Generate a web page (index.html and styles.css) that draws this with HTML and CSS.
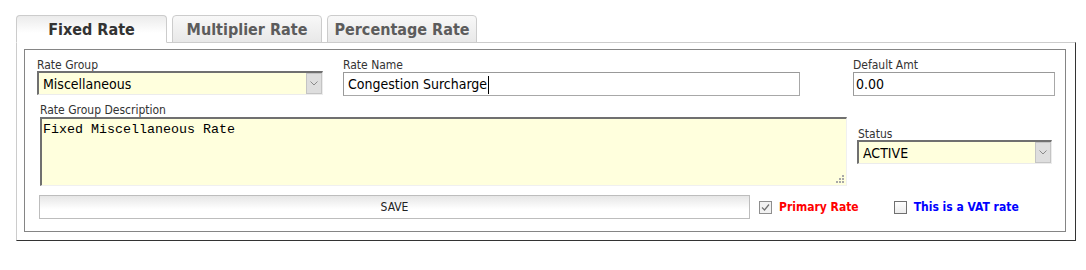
FILE: index.html
```html
<!DOCTYPE html>
<html>
<head>
<meta charset="utf-8">
<title>Rates</title>
<link rel="stylesheet" href="styles.css">
</head>
<body>
<div class="page">
  <div class="tabs">
    <div class="tab active">Fixed Rate</div>
    <div class="tab">Multiplier Rate</div>
    <div class="tab">Percentage Rate</div>
  </div>
  <div class="panel">
    <div class="box">
      <div class="row row1">
        <div class="field f-group">
          <label class="lbl">Rate Group</label>
          <div class="select-wrap">
            <select class="sel"><option>Miscellaneous</option></select>
            <span class="arrow"><svg width="8" height="5" viewBox="0 0 8 5"><path d="M0.5 0.5 L4 4 L7.5 0.5" fill="none" stroke="#8a8a8a" stroke-width="1"/></svg></span>
          </div>
        </div>
        <div class="field f-name">
          <label class="lbl">Rate Name</label>
          <div class="input-wrap">
            <input class="txt" type="text" value="Congestion Surcharge">
            <span class="caret"></span>
          </div>
        </div>
        <div class="field f-amt">
          <label class="lbl">Default Amt</label>
          <input class="txt amt" type="text" value="0.00">
        </div>
      </div>
      <div class="row row2">
        <div class="field f-desc">
          <label class="lbl">Rate Group Description</label>
          <div class="area-wrap">
            <textarea class="area">Fixed Miscellaneous Rate</textarea>
            <span class="grip"><svg width="8" height="8" viewBox="0 0 8 8"><g fill="#a8a8a8"><rect x="6" y="0" width="2" height="2"/><rect x="3" y="3" width="2" height="2"/><rect x="6" y="3" width="2" height="2"/><rect x="0" y="6" width="2" height="2"/><rect x="3" y="6" width="2" height="2"/><rect x="6" y="6" width="2" height="2"/></g></svg></span>
          </div>
        </div>
        <div class="field f-status">
          <label class="lbl lbl-status">Status</label>
          <div class="select-wrap">
            <select class="sel sel-status"><option>ACTIVE</option></select>
            <span class="arrow"><svg width="8" height="5" viewBox="0 0 8 5"><path d="M0.5 0.5 L4 4 L7.5 0.5" fill="none" stroke="#8a8a8a" stroke-width="1"/></svg></span>
          </div>
        </div>
      </div>
      <div class="row row3">
        <button class="save" type="button">SAVE</button>
        <div class="check primary">
          <svg width="13" height="13" viewBox="0 0 13 13"><rect x="0.5" y="0.5" width="12" height="12" fill="#f2f2f2" stroke="#8e8e8e"/><path d="M3 6.5 L5.5 9 L10 3.5" fill="none" stroke="#707070" stroke-width="1.2"/></svg>
          <span>Primary Rate</span>
        </div>
        <div class="check vat">
          <svg width="13" height="13" viewBox="0 0 13 13"><defs><linearGradient id="cb" x1="0" y1="0" x2="0" y2="1"><stop offset="0" stop-color="#ffffff"/><stop offset="1" stop-color="#ececec"/></linearGradient></defs><rect x="0.5" y="0.5" width="12" height="12" fill="url(#cb)" stroke="#707070"/></svg>
          <span>This is a VAT rate</span>
        </div>
      </div>
    </div>
  </div>
</div>
</body>
</html>
```
FILE: styles.css
```css
body {
  margin: 0;
  background: #ffffff;
  font-family: "DejaVu Sans Condensed", "DejaVu Sans", sans-serif;
  font-stretch: condensed;
  color: #333333;
}

.page {
  padding: 15px 0 0 16px;
}

.tabs {
  display: flex;
  gap: 5px;
  height: 28px;
  margin-bottom: -1px;
  position: relative;
  z-index: 1;
}

.tab {
  box-sizing: border-box;
  width: 150px;
  height: 28px;
  border: 1px solid #cccccc;
  border-radius: 4px 4px 0 0;
  display: flex;
  align-items: center;
  justify-content: center;
  font-weight: bold;
  font-size: 16px;
  color: #5c5c5c;
  background: linear-gradient(#f8f8f8, #e8e8e8);
}

.tab.active {
  width: 151px;
  color: #333333;
  background: linear-gradient(#ebebeb, #ffffff 65%);
  border-bottom-color: #ffffff;
}

.panel {
  box-sizing: border-box;
  width: 1060px;
  border: 1px solid;
  border-color: #cccccc #333333 #333333 #cccccc;
  padding: 6px 9px 8px 7px;
}

.box {
  border: 1px solid #858585;
  padding: 7px 10px 12px 12px;
}

.row {
  display: flex;
}

.lbl {
  display: block;
  box-sizing: border-box;
  height: 14px;
  padding-top: 1px;
  font-size: 12px;
  line-height: 14px;
  color: #333333;
}

.f-group {
  width: 286px;
  margin-right: 20px;
}

.f-name {
  width: 457px;
  margin-right: 53px;
}

.f-amt {
  width: 202px;
}

.select-wrap {
  position: relative;
}

.sel {
  display: block;
  box-sizing: border-box;
  width: 100%;
  height: 24px;
  margin: 0;
  appearance: none;
  -webkit-appearance: none;
  border-style: solid;
  border-width: 2px 1px 1px 2px;
  border-color: #707070 #ececec #ececec #707070;
  border-radius: 0;
  background: #ffffdd;
  padding: 0 0 0 4px;
  font-family: "DejaVu Sans Condensed", "DejaVu Sans", sans-serif;
  font-stretch: condensed;
  font-size: 14px;
  color: #000000;
  outline: none;
}

.arrow {
  position: absolute;
  right: 1px;
  top: 2px;
  bottom: 1px;
  width: 16px;
  box-sizing: border-box;
  border: 1px solid #c4c4c4;
  background: #dedede;
  display: flex;
  align-items: center;
  justify-content: center;
}

.input-wrap {
  position: relative;
}

.txt {
  display: block;
  box-sizing: border-box;
  width: 100%;
  height: 24px;
  margin: 1px 0 0 0;
  border: 1px solid #a8a8a8;
  border-top-color: #999999;
  border-left-color: #999999;
  border-radius: 0;
  padding: 0 4px;
  background: #ffffff;
  font-family: "DejaVu Sans Condensed", "DejaVu Sans", sans-serif;
  font-stretch: condensed;
  font-size: 14px;
  color: #000000;
  outline: none;
}

.txt.amt {
  padding: 0 2px;
}

.caret {
  position: absolute;
  left: 145px;
  top: 4px;
  width: 1px;
  height: 18px;
  background: #000000;
}

.row2 {
  margin-top: 6px;
}

.f-desc {
  width: 807px;
  margin-left: 3px;
}

.area-wrap {
  position: relative;
  margin-top: 1px;
}

.area {
  display: block;
  box-sizing: border-box;
  width: 807px;
  height: 69px;
  margin: 0;
  resize: none;
  border-style: solid;
  border-width: 2px 1px 1px 2px;
  border-color: #707070 #f0f0f0 #f0f0f0 #707070;
  border-radius: 0;
  background: #ffffdd;
  padding: 3px 1px;
  font-family: "Liberation Mono", monospace;
  font-size: 13.33px;
  color: #000000;
  outline: none;
}

.grip {
  position: absolute;
  right: 3px;
  bottom: 3px;
  width: 8px;
  height: 8px;
  display: flex;
}

.f-status {
  width: 195px;
  margin-left: 10px;
  padding-top: 24px;
}

.lbl-status {
  padding-left: 1px;
}

.row3 {
  margin-top: 9px;
  align-items: center;
}

.save {
  box-sizing: border-box;
  width: 711px;
  height: 24px;
  margin: 0 0 0 2px;
  border: 1px solid #bdbdbd;
  border-radius: 0;
  background: linear-gradient(#e6e6e6, #ffffff 60%);
  font-family: "DejaVu Sans Condensed", "DejaVu Sans", sans-serif;
  font-stretch: condensed;
  font-size: 12px;
  color: #222222;
  padding: 0;
}

.check {
  display: flex;
  align-items: center;
  gap: 7px;
  font-size: 12px;
  font-weight: bold;
}

.check svg {
  display: block;
}

.check.primary {
  margin-left: 9px;
  color: #ff0000;
}

.check.vat {
  margin-left: 35px;
  color: #0000ff;
}
```
